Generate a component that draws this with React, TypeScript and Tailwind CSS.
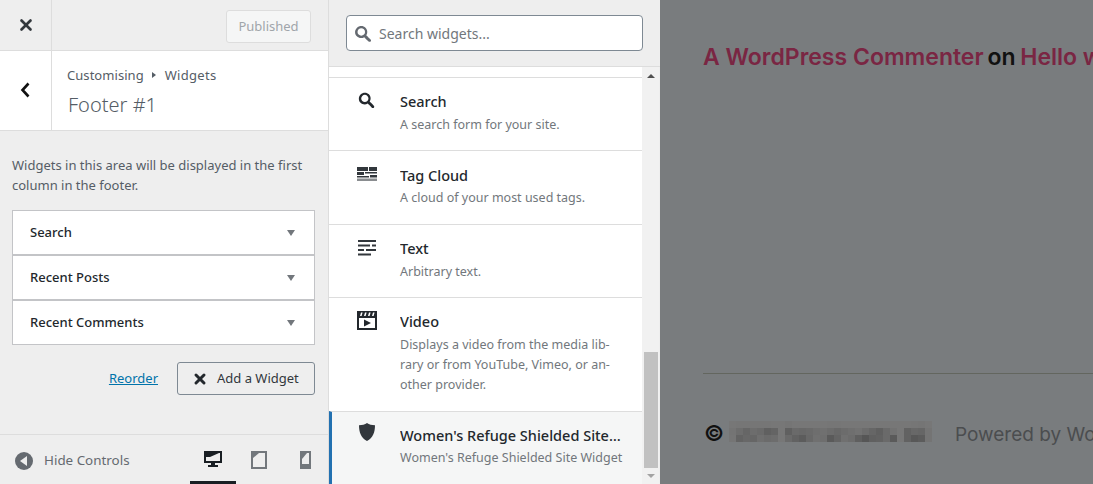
import { X } from 'lucide-react';

const widgets = ['Search', 'Recent Posts', 'Recent Comments'];

// pixelated (censored) copyright name, one string per row, hex grey per 7px block
const blurRows = [
  '77 76 76 76 76 76 77 77 75 77 77 77 77 77 76 76 77 77 77 77 77 77 77 77 77 77 76 75 77'.split(' '),
  '74 6d 66 6d 6a 60 64 77 60 6a 68 6a 6e 70 6c 68 6c 6f 72 6c 66 60 6a 72 77 62 68 66 74'.split(' '),
  '75 63 68 66 6f 6b 6d 77 6a 62 5c 68 70 6e 5a 64 70 6c 5f 56 60 62 6a 5a 77 62 58 5c 74'.split(' '),
];

function SearchIcon({ className }: { className?: string }) {
  return (
    <svg viewBox="2.800 2.600 14.200 14.700" className={className} fill="currentColor">
      <path d="M12.140 4.780c1.800 1.800 2.030 4.570.7 6.620.05.03 3.800 3.780 3.800 3.780.5.5.5 1.320 0 1.820-.5.5-1.320.5-1.820 0 0 0-3.750-3.750-3.780-3.800-2.050 1.330-4.820 1.100-6.620-.7-2.080-2.080-2.080-5.460 0-7.540 2.080-2.080 5.640-2.260 7.720-.18zm-1.420 6.120c1.300-1.300 1.300-3.400 0-4.700-1.300-1.300-3.400-1.300-4.700 0-1.300 1.300-1.300 3.400 0 4.700 1.300 1.300 3.400 1.300 4.700 0z" />
    </svg>
  );
}

function TagCloudIcon() {
  return (
    <svg viewBox="0 0 20 14" className="mt-[2px] -ml-[1px] h-[14px] w-5 text-[#32373c]" fill="currentColor">
      <rect x="0" y="0" width="11" height="4" />
      <rect x="12" y="0" width="8" height="4" />
      <rect x="0" y="5" width="7" height="3" />
      <rect x="8" y="5" width="12" height="1.500" />
      <rect x="0" y="9" width="12" height="1.500" />
      <rect x="13" y="8" width="7" height="2.500" />
      <rect x="0" y="11.500" width="20" height="2.500" fill="#8a8d90" />
    </svg>
  );
}

function TextIcon() {
  return (
    <svg viewBox="0 0 18 16" className="mt-[2px] h-4 w-[18px] text-[#32373c]" fill="currentColor">
      <rect x="0" y="0" width="18" height="2" />
      <rect x="0" y="4.500" width="12" height="2" />
      <rect x="14" y="4.500" width="4" height="2" />
      <rect x="0" y="9" width="6" height="2" />
      <rect x="8" y="9" width="10" height="2" />
      <rect x="0" y="13.500" width="13" height="2" />
    </svg>
  );
}

function VideoIcon() {
  return (
    <svg viewBox="0 0 20 19" className="-ml-[1px] h-[19px] w-5 text-[#23282d]" fill="currentColor">
      <path d="M0 0h20v19H0zM2 7v10h16V7zM4 1.500 3 5h1.600l1-3.500zm4 0L7 5h1.600l1-3.500zm4 0L11 5h1.600l1-3.500zm4 0L15 5h1.600l1-3.500z" fillRule="evenodd" />
      <path d="M7 8.500 14 12l-7 3.500z" />
    </svg>
  );
}

function ShieldIcon() {
  return (
    <svg viewBox="0 0 18 18" className="-mt-[2px] h-[18px] w-[18px] text-[#32373c]" fill="currentColor">
      <path d="M9 0c2 1.500 5 2.200 8 2.200C17 9 15 15 9 18 3 15 1 9 1 2.200 4 2.200 7 1.500 9 0z" />
    </svg>
  );
}

function DesktopIcon() {
  return (
    <svg viewBox="0 0 18 18" className="h-[18px] w-[18px]">
      <path d="M0 1h18v12H11v2h3v2H4v-2h3v-2H0z" fill="#191e23" />
      <path d="M2 3h14v8H2z" fill="#eee" />
      <path d="M2 3h13L6 7H2z" fill="#191e23" />
    </svg>
  );
}

function TabletIcon() {
  return (
    <svg viewBox="0 0 16 18" className="h-[18px] w-4">
      <path d="M0 0h16v18H0z" fill="#72777c" />
      <path d="M2 2h12v14H2z" fill="#eee" />
      <path d="M2 2h6L2 7z" fill="#72777c" />
    </svg>
  );
}

function PhoneIcon() {
  return (
    <svg viewBox="0 0 11 18" className="h-[18px] w-[11px]">
      <path d="M0 0h11v18H0z" fill="#72777c" />
      <path d="M2 2h7v11H2z" fill="#eee" />
      <path d="M2 2h5L2 8z" fill="#72777c" />
    </svg>
  );
}

function WidgetItem({
  icon,
  title,
  desc,
  active,
}: {
  icon: React.ReactNode;
  title: string;
  desc: string;
  active?: boolean;
}) {
  return (
    <div
      className={`flex border-t border-[#ddd] pt-[13.300px] ${active ? 'h-[74px] border-l-[3px] border-l-[#2271b1] bg-[#f5f6f6] pl-[26px]' : 'bg-white pb-[15.500px] pl-[29px]'}`}
    >
      <div className="flex w-[42px] shrink-0 justify-start">{icon}</div>
      <div className="min-w-0 flex-1 pr-4">
        <div className="truncate text-[14.500px] leading-5 font-medium text-[#23282d]">{title}</div>
        <div className="mt-[3.600px] text-[12.500px] leading-5 text-[#72777c]">{desc}</div>
      </div>
    </div>
  );
}

export default function App() {
  return (
    <div className="flex h-[484px] w-[1093px] overflow-hidden bg-[#797c7e] font-['Noto_Sans',sans-serif]">
      {/* customizer sidebar */}
      <div className="flex w-[329px] shrink-0 flex-col border-r border-[#ddd] bg-[#eee]">
        <div className="flex h-[51px] shrink-0 border-b border-[#ddd]">
          <div className="flex w-[52px] items-center justify-center border-r border-[#ddd]">
            <X className="h-[18px] w-[18px] text-[#32373c]" strokeWidth={3.500} />
          </div>
          <div className="flex flex-1 items-start justify-end pt-[10px] pr-[17px]">
            <div className="flex h-[33px] w-[85px] items-center justify-center rounded-[3px] border border-[#ddd] bg-[#f5f6f6] text-[13px] text-[#a0a5aa]">
              Published
            </div>
          </div>
        </div>

        <div className="flex h-[80px] shrink-0 border-b border-[#ddd] bg-white">
          <div className="flex w-[52px] items-center justify-center border-r border-[#ddd] pr-[2px] pb-[2px]">
            <svg viewBox="0 0 12 18" className="h-[18px] w-3 text-[#111]" fill="none" stroke="currentColor" strokeWidth="2.600">
              <path d="M9.500 2.500 3.500 9l6 6.500" />
            </svg>
          </div>
          <div className="pt-[14px] pl-[15px]">
            <div className="flex items-center text-[13px] leading-5 text-[#555d66]">
              <span className="tracking-[0.050px]">Customising</span>
              <span className="mx-[8px] h-0 w-0 border-y-[3px] border-l-[4px] border-y-transparent border-l-[#555d66]" />
              <span className="ml-[1px] tracking-[0.300px]">Widgets</span>
            </div>
            <div className="mt-[5px] ml-[1px] text-[20px] leading-[30px] font-light text-[#555d66]">Footer #1</div>
          </div>
        </div>

        <div className="flex-1 px-3 pt-6">
          <p className="text-[13px] leading-5 text-[#555d66]">
            Widgets in this area will be displayed in the first column in the footer.
          </p>
          <div className="mt-[15px] w-[303px]">
            {widgets.map((w) => (
              <div
                key={w}
                className="flex h-[45px] items-center justify-between border border-[#c3c4c7] bg-white pt-px pr-[19px] pl-[17px]"
              >
                <span className="text-[13px] font-medium text-[#23282d]">{w}</span>
                <span className="h-0 w-0 border-x-[4px] border-t-[6px] border-x-transparent border-t-[#72777c]" />
              </div>
            ))}
          </div>
          <div className="mt-[17px] flex w-[303px] items-center justify-end">
            <span className="mr-[19px] text-[13px] text-[#0073aa] underline">Reorder</span>
            <div className="flex h-[33px] w-[138px] items-center rounded-[3px] border border-[#7e8993] pl-[14px] text-[13px] text-[#32373c]">
              <X className="mr-[9px] h-[16px] w-[16px] text-[#23282d]" strokeWidth={4.500} />
              Add a Widget
            </div>
          </div>
        </div>

        <div className="flex h-[50px] shrink-0 items-start border-t border-[#ddd]">
          <div className="flex h-[50px] flex-1 items-center pt-px pl-[15px] text-[13.400px] text-[#656a70]">
            <span className="mr-[11px] flex h-[18px] w-[18px] items-center justify-center rounded-full bg-[#656a70]">
              <span className="mr-[2px] h-0 w-0 border-y-[5px] border-r-[7px] border-y-transparent border-r-[#eee]" />
            </span>
            Hide Controls
          </div>
          <div className="flex h-[49px] items-center">
            <div className="flex h-[49px] w-[46px] items-center justify-center border-b-[3px] border-[#191e23] pt-[2px]">
              <DesktopIcon />
            </div>
            <div className="flex h-[49px] w-[46px] items-center justify-center pt-[1px]">
              <TabletIcon />
            </div>
            <div className="flex h-[49px] w-[46px] items-center justify-center pt-[1px]">
              <PhoneIcon />
            </div>
          </div>
        </div>
      </div>

      {/* available widgets */}
      <div className="flex w-[331px] shrink-0 flex-col bg-[#eee]">
        <div className="h-[67px] shrink-0 border-b border-[#ddd] px-[17px] pt-[15px]">
          <div className="flex h-[36px] items-center rounded-[4px] border border-[#7e8993] bg-white pl-2 text-[14px] text-[#72777c]">
            <SearchIcon className="mr-[8px] h-[17px] w-[16px] text-[#646970]" />
            Search widgets...
          </div>
        </div>
        <div className="flex min-h-0 flex-1">
          <div className="w-[313px] shrink-0 bg-white">
            <div className="h-[10px]" />
            <WidgetItem icon={<SearchIcon className="mt-px h-[16px] w-[17px] text-[#23282d]" />} title="Search" desc="A search form for your site." />
            <WidgetItem icon={<TagCloudIcon />} title="Tag Cloud" desc="A cloud of your most used tags." />
            <WidgetItem icon={<TextIcon />} title="Text" desc="Arbitrary text." />
            <WidgetItem
              icon={<VideoIcon />}
              title="Video"
              desc="Displays a video from the media lib-rary or from YouTube, Vimeo, or an-other provider."
            />
            <WidgetItem icon={<ShieldIcon />} title="Women's Refuge Shielded Site…" desc="Women's Refuge Shielded Site Widget" active />
          </div>
          <div className="flex w-[17px] shrink-0 flex-col items-center bg-[#f1f1f1]">
            <span className="mt-[7px] h-0 w-0 border-x-[4px] border-b-[4px] border-x-transparent border-b-[#505050]" />
            <div className="mt-[274px] h-[116px] w-[14px] bg-[#c1c1c1]" />
            <span className="mt-[6px] h-0 w-0 border-x-[4px] border-t-[4px] border-x-transparent border-t-[#a3a3a3]" />
          </div>
        </div>
      </div>

      {/* site preview behind the overlay */}
      <div className="flex min-w-0 flex-1 flex-col overflow-hidden pt-[41px] pl-[43px] font-['Inter',sans-serif] whitespace-nowrap">
        <div className="text-[23px] leading-[32px] font-semibold text-[#7a2643]">
          A WordPress Commenter <span className="-mr-px -ml-[2px] text-[#111]">on</span> Hello world!
        </div>
        <div className="mt-[300px] h-px w-[500px] shrink-0 bg-[#63665f]" />
        <div className="mt-[47px] flex h-[24px] shrink-0 items-center text-[19px] text-[#4b4d4f]">
          <span className="w-[26px] shrink-0 pl-px text-[22px] font-semibold text-[#111]">©</span>
          <span className="-mt-[3px] flex shrink-0 flex-col">
            {blurRows.map((row, r) => (
              <span key={r} className="flex h-[7px]">
                {row.map((c, i) => (
                  <span key={i} className="h-full w-[7px] shrink-0" style={{ backgroundColor: `#${c}${c}${c}` }} />
                ))}
              </span>
            ))}
          </span>
          <span className="ml-[23px] shrink-0 pt-[4px]">Powered by WordPress</span>
        </div>
      </div>
    </div>
  );
}
